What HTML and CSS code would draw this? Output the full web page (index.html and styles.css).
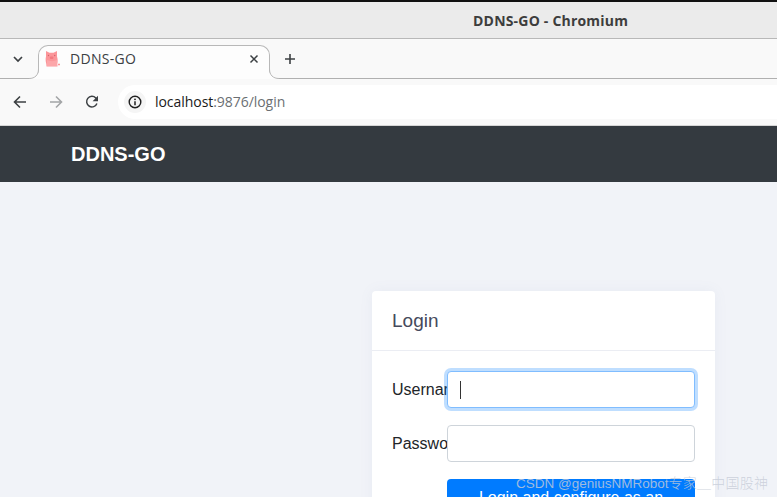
FILE: index.html
```html
<!DOCTYPE html>
<html lang="en">
<head>
<meta charset="utf-8">
<title>DDNS-GO - Chromium</title>
<link rel="stylesheet" href="styles.css">
</head>
<body>
<header class="titlebar"><span class="title">DDNS-GO - Chromium</span></header>
<div class="tabstrip">
  <button class="strip-btn tablist" aria-label="Tab list">
    <svg width="12" height="12" viewBox="0 0 12 12"><path d="M2 4l4 4 4-4" fill="none" stroke="#3c4043" stroke-width="1.7"/></svg>
  </button>
  <div class="tab">
    <svg class="flare flare-l" width="10" height="10" viewBox="0 0 10 10"><path d="M10 0.5C9.500 6 6 9.500 0 9.500V10h10z" fill="#fdfdfd"/><path d="M9.500 0C9.500 6 6 9.500 0 9.500" fill="none" stroke="#b8b8b8"/></svg>
    <svg class="flare flare-r" width="10" height="10" viewBox="0 0 10 10"><path d="M0 0.5C.5 6 4 9.500 10 9.500V10H0z" fill="#fdfdfd"/><path d="M.5 0C.5 6 4 9.500 10 9.500" fill="none" stroke="#b8b8b8"/></svg>
    <svg class="favicon" width="16" height="18" viewBox="0 0 16 18">
      <path d="M1 1l3.500 1.800h4L12 1v5.500c.7 2 .9 5 .3 7.500l.2 2.500H1.500L1.300 14C.6 11.500.4 8.500 1 6.500z" fill="#fb9599"/>
      <path d="M2 10c3 1.500 7 1.500 10 0v6H2z" fill="#fca6a9"/>
      <rect x="4.800" y="6.500" width="3.600" height="2.400" rx="1" fill="#f27a80"/>
      <circle cx="3.500" cy="5.500" r=".7" fill="#d0666c"/><circle cx="9.700" cy="5.500" r=".7" fill="#d0666c"/>
      <path d="M13 14.500h2" stroke="#fb9599" stroke-width="1.300"/>
    </svg>
    <span class="tab-title">DDNS-GO</span>
    <svg class="tab-close" width="10" height="10" viewBox="0 0 10 10"><path d="M1.500 1.500l7 7M8.500 1.500l-7 7" stroke="#3c4043" stroke-width="1.500"/></svg>
  </div>
  <button class="strip-btn newtab" aria-label="New tab">
    <svg width="12" height="12" viewBox="0 0 12 12"><path d="M6 1v10M1 6h10" stroke="#3c4043" stroke-width="1.600"/></svg>
  </button>
</div>
<div class="toolbar">
  <button class="tool" aria-label="Back">
    <svg width="14" height="14" viewBox="0 0 14 14"><path d="M13 7H2M7 1.500L1.500 7 7 12.500" fill="none" stroke="#3c4043" stroke-width="1.600"/></svg>
  </button>
  <button class="tool" aria-label="Forward">
    <svg width="14" height="14" viewBox="0 0 14 14"><path d="M1 7h11M7 1.500L12.500 7 7 12.500" fill="none" stroke="#a3a5a7" stroke-width="1.600"/></svg>
  </button>
  <button class="tool" aria-label="Reload">
    <svg width="14" height="14" viewBox="0 0 14 14"><path d="M11.900 8.500A5.300 5.300 0 1 1 10.800 3L12.500 5" fill="none" stroke="#3c4043" stroke-width="1.500"/><path d="M13 .8v5.400H7.600z" fill="#3c4043"/></svg>
  </button>
  <div class="omnibox">
    <span class="info">
      <svg width="14" height="14" viewBox="0 0 14 14"><circle cx="7" cy="7" r="5.800" fill="none" stroke="#1f1f1f" stroke-width="1.400"/><path d="M7 6.200v4" stroke="#1f1f1f" stroke-width="1.500"/><circle cx="7" cy="4.300" r=".9" fill="#1f1f1f"/></svg>
    </span>
    <span class="url"><span class="host">localhost</span>:9876/login</span>
  </div>
</div>
<nav class="navbar"><span class="brand">DDNS-GO</span></nav>
<main class="page">
  <section class="card">
    <h2 class="card-head">Login</h2>
    <div class="card-body">
      <div class="row">
        <label class="field-label">Username</label>
        <div class="input focused"><span class="caret"></span></div>
      </div>
      <div class="row">
        <label class="field-label">Password</label>
        <div class="input"></div>
      </div>
      <div class="row">
        <span class="field-label"></span>
        <button class="submit">Login and configure as an admin</button>
      </div>
    </div>
  </section>
</main>
<div class="watermark">CSDN @geniusNMRobot<span class="wm-cjk">专家＿中国股神</span></div>
</body>
</html>
```
FILE: styles.css
```css
* { box-sizing: border-box; }
html, body { margin: 0; height: 497px; overflow: hidden; }
body { width: 777px; position: relative; background: #f1f3f8; font-family: "Liberation Sans", Arial, sans-serif; }
button { border: 0; background: none; padding: 0; font: inherit; }

.titlebar { height: 39px; background: #ebebeb; border-top: 2px solid #111; border-bottom: 1px solid #b8b8b8; display: flex; align-items: center; padding: 1px 0 0 473px; }
.title { font: 700 14px/1 "Open Sans", "DejaVu Sans", sans-serif; letter-spacing: .2px; color: #3d3d3d; white-space: nowrap; }

.tabstrip { height: 40px; background: #f9f9f9; border-bottom: 1px solid #b0b0b0; display: flex; align-items: flex-end; padding-left: 38px; position: relative; }
.strip-btn { display: flex; align-items: center; justify-content: center; position: relative; }
.tablist { width: 12px; height: 12px; position: absolute; left: 12px; top: 14px; }
.tab { position: relative; width: 232px; height: 34px; margin-bottom: -1px; background: #fdfdfd; border: 1px solid #b8b8b8; border-bottom: 0; border-radius: 10px 10px 0 0; display: flex; align-items: center; padding: 0 10px 7px 6px; }
.flare { position: absolute; bottom: 0; }
.flare-l { left: -10px; }
.flare-r { right: -10px; }
.favicon { flex: none; }
.tab-title { margin-left: 9px; flex: 1; font: 14px/1 "Open Sans", "Noto Sans", sans-serif; letter-spacing: .3px; color: #3c4043; }
.tab-close { flex: none; }
.newtab { width: 12px; height: 12px; margin: 0 0 13px 14px; }

.toolbar { height: 46px; background: #f9f9f9; display: flex; align-items: center; padding-left: 13px; }
.tool { width: 14px; height: 14px; margin-right: 22px; display: flex; }
.omnibox { flex: 1; height: 34px; margin-left: -3px; background: #fff; border-radius: 17px 0 0 17px; display: flex; align-items: center; padding-left: 6px; }
.info { width: 22px; height: 22px; border-radius: 50%; background: #f5f5f5; display: flex; align-items: center; justify-content: center; }
.url { margin-left: 9px; font: 14px/1 "Open Sans", "Noto Sans", sans-serif; letter-spacing: -.05px; color: #6b6f73; }
.host { color: #1a1a1a; }

.navbar { height: 57px; background: #343a40; border-top: 1px solid #d6d6d6; display: flex; align-items: center; padding-left: 71px; }
.brand { color: #fff; font-size: 20px; font-weight: 700; }

.page { padding: 109px 0 0 372px; }
.card { width: 343px; height: 260px; background: #fff; border-radius: 4px; box-shadow: 0 0 14px rgba(120,130,170,.07); }
.card-head { margin: 0; height: 60px; padding: 1px 20px 0; border-bottom: 1px solid #ebedf3; display: flex; align-items: center; font-size: 19px; font-weight: 400; color: #454a5c; }
.card-body { padding: 20px 20px 0; }
.row { display: flex; align-items: center; margin-bottom: 17px; }
.field-label { width: 55px; flex: none; overflow: hidden; white-space: nowrap; font-size: 16px; color: #212529; }
.input { width: 248px; height: 37px; flex: none; background: #fff; border: 1px solid #ced4da; border-radius: 4px; display: flex; align-items: center; padding-left: 12px; }
.input.focused { border-color: #80bdff; box-shadow: 0 0 0 3px rgba(0,123,255,.25); }
.caret { width: 1px; height: 18px; background: #333; }
.submit { width: 248px; height: 62px; flex: none; background: #007bff; color: #fff; border-radius: 4px; font-size: 16px; line-height: 24px; padding: 6px 12px; }

.watermark { position: absolute; left: 516px; top: 472px; font: 13.5px/20px "Liberation Sans", sans-serif; color: rgba(196,202,214,.82); white-space: nowrap; }
.wm-cjk { font: 300 14px/20px "Noto Sans CJK SC", sans-serif; letter-spacing: .25px; }
```
